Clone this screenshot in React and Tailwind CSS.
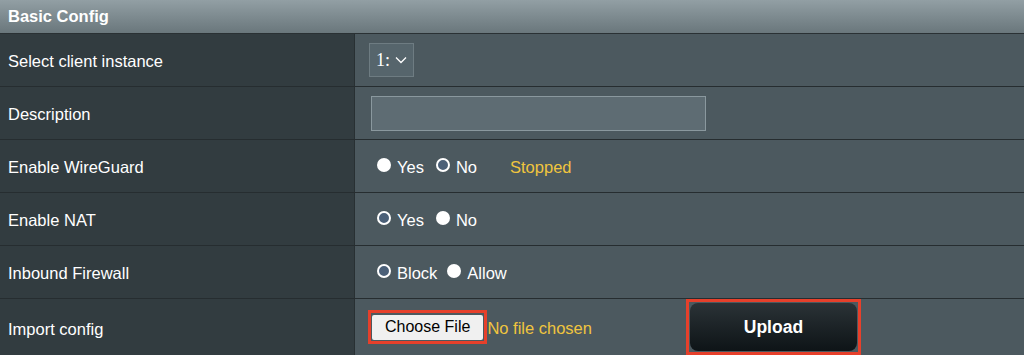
import React from 'react'

function Radio({ checked }) {
  if (checked) {
    return <span className="inline-block w-[14px] h-[14px] rounded-full border-2 border-white bg-[#4b6078] mb-[3px]" />
  }
  return <span className="inline-block w-[14px] h-[14px] rounded-full bg-white mb-[3px]" />
}

function Choice({ checked, label }) {
  return (
    <label className="flex items-center gap-[6px]">
      <Radio checked={checked} />
      <span className="pt-[2px]">{label}</span>
    </label>
  )
}

function Row({ label, children, tall }) {
  return (
    <div className={`grid grid-cols-[355px_1fr] border-b border-[#262d30] ${tall ? 'h-[60px]' : 'h-[53px]'}`}>
      <div className={`flex pl-2 bg-[#323c40] border-r border-[#283033] ${tall ? 'items-start pt-[18px]' : 'items-center pt-[2px]'}`}>{label}</div>
      <div className={`flex pl-[14px] bg-[#4c595f] ${tall ? 'items-start' : 'items-center'}`}>{children}</div>
    </div>
  )
}

export default function App() {
  return (
    <div className="w-[1024px] h-[355px] overflow-hidden bg-[#4c595f] text-white text-[16.5px] font-['Liberation_Sans',Arial,sans-serif]">
      <div className="h-[34px] flex items-center pl-2 font-bold bg-gradient-to-b from-[#929fa4] to-[#6a777c] border-b border-[#2a3134]">
        Basic Config
      </div>

      <Row label="Select client instance">
        <div className="flex items-center h-[34px] w-[45px] bg-[#56656c] border border-[#6e7c82] pl-[6px] gap-[5px]">
          <span className="font-['Liberation_Serif',serif] text-[18px]">1:</span>
          <svg width="12" height="8" viewBox="0 0 12 8" fill="none" stroke="white" strokeWidth="1.3">
            <path d="M1 1.5 L6 6.5 L11 1.5" />
          </svg>
        </div>
      </Row>

      <Row label="Description">
        <div className="ml-[2px] w-[335px] h-[35px] bg-[#5e6c73] border border-[#8a989e]" />
      </Row>

      <Row label="Enable WireGuard">
        <div className="flex items-center gap-[12px] pl-[8px]">
          <Choice label="Yes" />
          <Choice checked label="No" />
          <span className="ml-[21px] pt-[2px] text-[#f0c53e]">Stopped</span>
        </div>
      </Row>

      <Row label="Enable NAT">
        <div className="flex items-center gap-[12px] pl-[8px]">
          <Choice checked label="Yes" />
          <Choice label="No" />
        </div>
      </Row>

      <Row label="Inbound Firewall">
        <div className="flex items-center gap-[10px] pl-[8px]">
          <Choice checked label="Block" />
          <Choice label="Allow" />
        </div>
      </Row>

      <Row label="Import config" tall>
        <div className="flex items-start -ml-[1px]">
          <div className="mt-[11px] border-[3px] border-[#e6402b] p-[1px]">
            <button className="h-[25px] px-[13px] bg-[#f0f0f0] text-black text-[16px] rounded-[2px]">Choose File</button>
          </div>
          <span className="mt-[17px] text-[#f0c53e]">No file chosen</span>
          <div className="ml-[94px] border-[3px] border-[#e6402b] p-[1px]">
            <button className="w-[167px] h-[48px] rounded-[8px] bg-gradient-to-b from-[#2b3337] to-[#0e1417] text-white font-bold text-[17.5px]">
              Upload
            </button>
          </div>
        </div>
      </Row>
    </div>
  )
}
